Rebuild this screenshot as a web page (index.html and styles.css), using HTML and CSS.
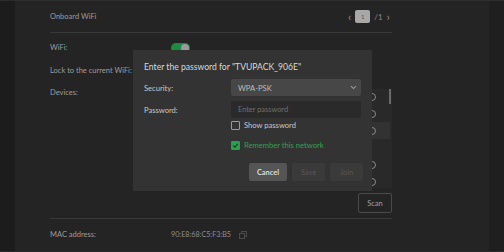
FILE: index.html
```html
<!DOCTYPE html>
<html lang="en">
<head>
    <meta charset="UTF-8">
    <meta name="viewport" content="width=device-width, initial-scale=1.0">
    <title>Onboard WiFi</title>
    <link rel="stylesheet" href="styles.css">
</head>
<body>
    <div class="page">
        <div class="side side-left"></div>
        <div class="panel">
            <div class="header">
                <span class="title">Onboard WiFi</span>
                <div class="pager">
                    <span class="arrow">&lsaquo;</span>
                    <span class="page-box">1</span>
                    <span class="page-total">/1</span>
                    <span class="arrow">&rsaquo;</span>
                </div>
            </div>
            <div class="row">
                <span class="label">WiFi:</span>
                <span class="toggle"><span class="knob"></span></span>
            </div>
            <div class="row">
                <span class="label">Lock to the current WiFi:</span>
            </div>
            <div class="row row-devices">
                <span class="label">Devices:</span>
                <div class="devices">
                    <div class="device"><span class="radio"></span></div>
                    <div class="device"><span class="radio"></span></div>
                    <div class="device active"><span class="radio"></span></div>
                    <div class="device"></div>
                    <div class="device"><span class="radio"></span></div>
                    <div class="device"><span class="radio"></span></div>
                    <div class="scrollbar"></div>
                </div>
            </div>
            <div class="scan-wrap">
                <button class="scan-btn">Scan</button>
            </div>
            <div class="row row-mac">
                <span class="label">MAC address:</span>
                <span class="mac">90:E8:68:C5:F3:B5</span>
                <svg class="copy" width="8" height="8" viewBox="0 0 8 8">
                    <rect x="2.5" y="0.5" width="5" height="5" fill="none" stroke="#4a4a4a"/>
                    <rect x="0.5" y="2.5" width="5" height="5" fill="#242424" stroke="#4a4a4a"/>
                </svg>
            </div>
        </div>
        <div class="side side-right"></div>

        <div class="modal">
            <div class="modal-title">Enter the password for "TVUPACK_906E"</div>
            <div class="field">
                <span class="field-label">Security:</span>
                <div class="select">
                    <span>WPA-PSK</span>
                    <svg width="7" height="5" viewBox="0 0 7 5"><path d="M1 1.2 L3.5 3.6 L6 1.2" fill="none" stroke="#9a9a9a" stroke-width="1.1"/></svg>
                </div>
            </div>
            <div class="field field-pw">
                <span class="field-label">Password:</span>
                <input class="input" type="password" placeholder="Enter password">
            </div>
            <div class="check-row">
                <span class="checkbox"></span>
                <span>Show password</span>
            </div>
            <div class="check-row checked">
                <span class="checkbox">
                    <svg width="7" height="7" viewBox="0 0 7 7"><path d="M1.3 3.6 L2.9 5.1 L5.8 1.8" fill="none" stroke="#1b3a22" stroke-width="1.2"/></svg>
                </span>
                <span>Remember this network</span>
            </div>
            <div class="actions">
                <button class="btn btn-cancel">Cancel</button>
                <button class="btn btn-off">Save</button>
                <button class="btn btn-off">Join</button>
            </div>
        </div>
    </div>
</body>
</html>
```

FILE: styles.css
```css
body {
    margin: 0;
    background: #1c1c1c;
    font-family: 'Lato', 'Open Sans', sans-serif;
    color: #9c9c9c;
}
.page {
    position: relative;
    display: flex;
    height: 250px;
    border-top: 1px solid #2c2c2c;
    border-bottom: 1px solid #2c2c2c;
}
.side {
    width: 15px;
}
.side-left {
    background: #1c1c1c;
}
.side-right {
    background: #1f1f1f;
}
.panel {
    flex: 1;
    background: #242424;
    padding: 0 97px 0 35px;
    font-size: 7.5px;
}
.header {
    display: flex;
    justify-content: space-between;
    align-items: center;
    height: 31px;
    border-bottom: 1px solid #383838;
}
.pager {
    display: flex;
    align-items: center;
    gap: 4px;
    margin-right: 2px;
    color: #8a8a8a;
    font-size: 8px;
}
.arrow {
    font-size: 12px;
    line-height: 1;
}
.page-box {
    width: 15px;
    height: 13px;
    background: #a8a8a8;
    border-radius: 2px;
    color: #555;
    font-size: 6px;
    display: flex;
    align-items: center;
    justify-content: center;
}
.row {
    display: flex;
    align-items: center;
    height: 23px;
}
.row:nth-child(2) {
    margin-top: 3px;
}
.label {
    width: 121px;
}
.toggle {
    width: 19px;
    height: 10px;
    border-radius: 6px;
    background: #1c8a45;
    display: flex;
    align-items: center;
    justify-content: flex-end;
    padding: 0 1px;
    box-sizing: border-box;
}
.knob {
    width: 8px;
    height: 8px;
    border-radius: 50%;
    background: #9a9a9a;
}
.row-devices {
    align-items: flex-start;
    height: auto;
    margin-top: 7px;
}
.row-devices .label {
    margin-top: -1px;
}
.devices {
    position: relative;
    flex: 1;
    height: 99px;
    background: #292929;
    overflow: hidden;
}
.device {
    height: 17px;
    display: flex;
    align-items: center;
    justify-content: flex-end;
    padding-right: 14px;
    margin-right: 2px;
}
.device:first-child {
    margin-top: -1px;
}
.device.active {
    background: #323232;
}
.radio {
    width: 6px;
    height: 6px;
    border: 1px solid #8a8a8a;
    border-radius: 50%;
}
.scrollbar {
    position: absolute;
    right: 1px;
    top: 0;
    width: 2px;
    height: 15px;
    background: #6a6a6a;
}
.scan-wrap {
    display: flex;
    justify-content: flex-end;
    padding: 5px 0 5px;
    border-bottom: 1px solid #383838;
}
.scan-btn {
    width: 34px;
    height: 20px;
    background: transparent;
    border: 1px solid #4a4a4a;
    border-radius: 2px;
    color: #a0a0a0;
    font-family: inherit;
    font-size: 7.5px;
    padding: 0;
}
.row-mac {
    height: 31px;
}
.mac {
    color: #8e8e8e;
    font-size: 7.2px;
}
.copy {
    margin-left: 8px;
}
.modal {
    position: absolute;
    left: 133px;
    top: 49px;
    width: 239px;
    height: 141px;
    background: #333333;
    padding: 0 9px 0 11px;
    box-sizing: border-box;
    color: #c8c8c8;
    font-size: 7.6px;
}
.modal-title {
    font-size: 8.6px;
    color: #d8d8d8;
    padding-top: 10px;
    height: 15px;
    line-height: 14px;
    margin-bottom: 4px;
}
.field {
    display: flex;
    align-items: center;
    margin-bottom: 5px;
}
.field-pw {
    margin-bottom: 2px;
}
.field-label {
    width: 87px;
}
.select, .input {
    width: 130px;
    height: 17px;
    border-radius: 2px;
    box-sizing: border-box;
}
.select {
    background: #474747;
    display: flex;
    align-items: center;
    justify-content: space-between;
    padding: 0 4px 0 7px;
    color: #bdbdbd;
}
.input {
    background: #2a2a2a;
    border: none;
    padding: 0 7px;
    font-family: inherit;
    font-size: 7.4px;
    color: #ccc;
}
.input::placeholder {
    color: #6f6f6f;
}
.check-row {
    display: flex;
    align-items: center;
    gap: 4px;
    margin-left: 87px;
    height: 10px;
}
.check-row.checked {
    margin-top: 10px;
    color: #35a052;
}
.checkbox {
    width: 7px;
    height: 7px;
    border: 1px solid #9a9a9a;
    border-radius: 1px;
    display: flex;
    align-items: center;
    justify-content: center;
}
.checked .checkbox {
    background: #2ba04c;
    border-color: #2ba04c;
}
.actions {
    display: flex;
    justify-content: flex-end;
    gap: 5px;
    margin-top: 13px;
}
.btn {
    height: 18px;
    border: none;
    border-radius: 2px;
    font-family: inherit;
    font-size: 7.4px;
    padding: 0;
}
.btn-cancel {
    width: 38px;
    background: #555555;
    color: #dcdcdc;
    font-weight: 700;
}
.btn-off {
    width: 33px;
    background: #3a3a3a;
    color: #585858;
}
```
